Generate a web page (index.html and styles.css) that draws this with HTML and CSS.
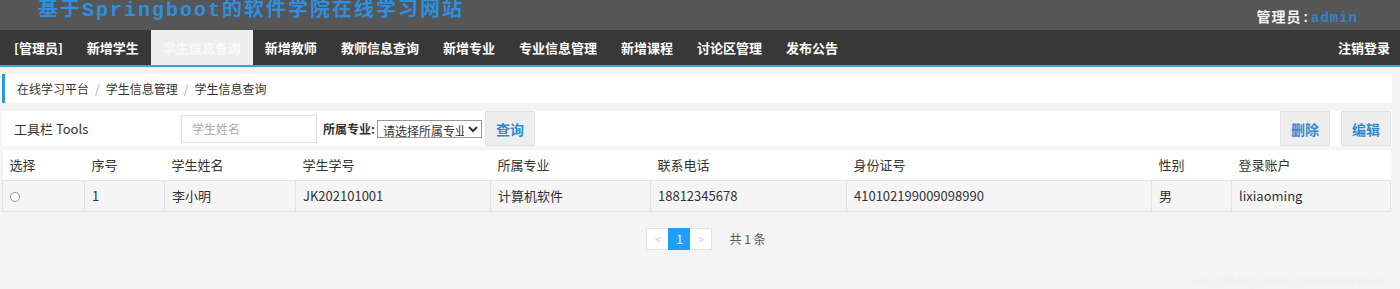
FILE: index.html
```html
<!DOCTYPE html>
<html lang="zh">
<head>
<meta charset="utf-8">
<title>学生信息查询</title>
<link rel="stylesheet" href="styles.css">
</head>
<body>
<header class="topbar">
  <div class="site-title">基于Springboot的软件学院在线学习网站</div>
  <div class="user">管理员:<span class="user-name">admin</span></div>
</header>
<nav class="nav">
  <ul class="nav-list">
    <li class="nav-item">[管理员]</li>
    <li class="nav-item">新增学生</li>
    <li class="nav-item active">学生信息查询</li>
    <li class="nav-item">新增教师</li>
    <li class="nav-item">教师信息查询</li>
    <li class="nav-item">新增专业</li>
    <li class="nav-item">专业信息管理</li>
    <li class="nav-item">新增课程</li>
    <li class="nav-item">讨论区管理</li>
    <li class="nav-item">发布公告</li>
  </ul>
  <div class="nav-item logout">注销登录</div>
</nav>
<main class="main">
  <div class="breadcrumb">
    <span>在线学习平台</span><span class="sep">/</span><span>学生信息管理</span><span class="sep">/</span><span>学生信息查询</span>
  </div>
  <div class="toolbar">
    <div class="toolbar-title">工具栏 Tools</div>
    <input class="search-input" type="text" placeholder="学生姓名">
    <label class="field-label">所属专业:</label>
    <select class="field-select"><option>请选择所属专业</option></select>
    <button class="tool-btn">查询</button>
    <div class="spacer"></div>
    <button class="tool-btn">删除</button>
    <button class="tool-btn last">编辑</button>
  </div>
  <table class="grid">
    <colgroup>
      <col class="c1"><col class="c2"><col class="c3"><col class="c4"><col class="c5"><col class="c6"><col class="c7"><col class="c8"><col class="c9">
    </colgroup>
    <thead>
      <tr><th>选择</th><th>序号</th><th>学生姓名</th><th>学生学号</th><th>所属专业</th><th>联系电话</th><th>身份证号</th><th>性别</th><th>登录账户</th></tr>
    </thead>
    <tbody>
      <tr><td><span class="radio"></span></td><td>1</td><td>李小明</td><td>JK202101001</td><td>计算机软件</td><td>18812345678</td><td>410102199009098990</td><td>男</td><td>lixiaoming</td></tr>
    </tbody>
  </table>
  <div class="pager">
    <span class="page-box prev">&lt;</span><span class="page-box current">1</span><span class="page-box next">&gt;</span>
    <span class="page-total">共 1 条</span>
  </div>
  <div class="watermark">https://blog.csdn.net/whirlwind526</div>
</main>
</body>
</html>
```
FILE: styles.css
```css
* { box-sizing: border-box; }
html, body { margin: 0; padding: 0; }
body {
  background: #f4f4f4;
  font-family: "Noto Sans CJK SC", "Noto Sans", sans-serif;
  color: #333;
  width: 1400px;
  height: 289px;
  overflow: hidden;
}
.topbar {
  height: 30px;
  background: #565656;
  display: flex;
  align-items: center;
  justify-content: space-between;
  padding: 0 42px 0 38px;
}
.site-title {
  font-family: "Liberation Mono", "Noto Sans CJK SC", monospace;
  font-weight: bold;
  font-size: 20px;
  letter-spacing: 2px;
  color: #2d8fe0;
  line-height: 26px;
  margin-top: -8px;
}
.user {
  font-family: "Liberation Mono", "Noto Sans CJK SC", monospace;
  font-size: 14px;
  font-weight: bold;
  color: #f2f2f2;
  letter-spacing: 1px;
  margin-top: 2px;
}
.user-name { color: #2f85cf; }
.nav {
  height: 37px;
  background: #383838;
  border-bottom: 2px solid #3ba1dc;
  display: flex;
  justify-content: space-between;
  padding: 0 0 0 2px;
}
.nav-list {
  list-style: none;
  margin: 0;
  padding: 0;
  display: flex;
}
.nav-item {
  padding: 0 12px;
  height: 35px;
  line-height: 35px;
  font-size: 13px;
  font-weight: bold;
  color: #fff;
  white-space: nowrap;
}
.nav-item.active { background: #eeeeee; color: #fafafa; }
.logout { padding-right: 10px; }
.main {
  margin: 0 8px 0 2px;
  position: relative;
  height: 222px;
}
.breadcrumb {
  margin-top: 7px;
  height: 29px;
  background: #fff;
  border-left: 3px solid #2b9ad8;
  display: flex;
  align-items: center;
  padding-left: 12px;
  font-size: 12px;
  color: #333;
}
.sep { color: #aaa; margin: 0 6px; }
.toolbar {
  margin-top: 8px;
  height: 35px;
  background: #fff;
  display: flex;
  align-items: center;
}
.toolbar-title {
  font-size: 13px;
  color: #333;
  padding-left: 12px;
  width: 179px;
}
.search-input {
  width: 136px;
  height: 28px;
  border: 1px solid #ddd;
  padding: 0 10px;
  font-family: inherit;
  font-size: 12px;
  color: #333;
  outline: none;
}
.search-input::placeholder { color: #aaa; }
.field-label {
  font-size: 12px;
  font-weight: bold;
  margin-left: 6px;
  margin-right: 2px;
  color: #333;
}
.field-select {
  width: 105px;
  height: 18px;
  font-family: inherit;
  font-size: 12px;
  color: #333;
  border: 1px solid #999;
  padding: 0 1px;
  background: #fff;
  border-radius: 0;
}
.tool-btn {
  height: 35px;
  width: 50px;
  margin-left: 3px;
  background: #eeeeee;
  border: 1px solid #e2e2e2;
  color: #2e8bd4;
  font-family: inherit;
  font-size: 14px;
  font-weight: bold;
  padding: 0;
}
.tool-btn.last { margin-left: 11px; margin-right: 1px; }
.spacer { flex: 1; }
.grid {
  margin-top: 4px;
  border-collapse: collapse;
  table-layout: fixed;
  width: 1388px;
  font-size: 13px;
  color: #333;
}
.c1 { width: 82px; } .c2 { width: 80px; } .c3 { width: 131px; }
.c4 { width: 195px; } .c5 { width: 160px; } .c6 { width: 196px; }
.c7 { width: 305px; } .c8 { width: 80px; } .c9 { width: 159px; }
.grid th {
  background: #fff;
  height: 30px;
  text-align: left;
  font-weight: normal;
  padding: 0 7px;
  border-bottom: 1px solid #e4e4e4;
}
.grid td {
  background: #f5f5f5;
  height: 31px;
  padding: 0 7px;
  border: 1px solid #e0e4e8;
}
.radio {
  display: inline-block;
  width: 10px;
  height: 10px;
  border: 1px solid #999;
  border-radius: 50%;
  vertical-align: middle;
  background: #fff;
}
.pager {
  margin-top: 16px;
  display: flex;
  justify-content: center;
  align-items: center;
  padding-left: 18px;
  font-size: 12px;
}
.page-box {
  width: 22px;
  height: 22px;
  line-height: 20px;
  text-align: center;
  border: 1px solid #e2e2e2;
  background: #fff;
  color: #ccc;
  font-size: 11px;
}
.page-box.current {
  background: #1e9fff;
  border-color: #1e9fff;
  color: #fff;
  font-size: 12px;
}
.page-box.prev { border-right: none; }
.page-box.next { border-left: none; }
.page-total { margin-left: 17px; color: #555; }
.watermark {
  position: absolute;
  right: 4px;
  bottom: 8px;
  font-family: "Liberation Sans", sans-serif;
  font-size: 13px;
  color: #fafafa;
  text-shadow: 0 0 1px #d8d8d8;
}
```
